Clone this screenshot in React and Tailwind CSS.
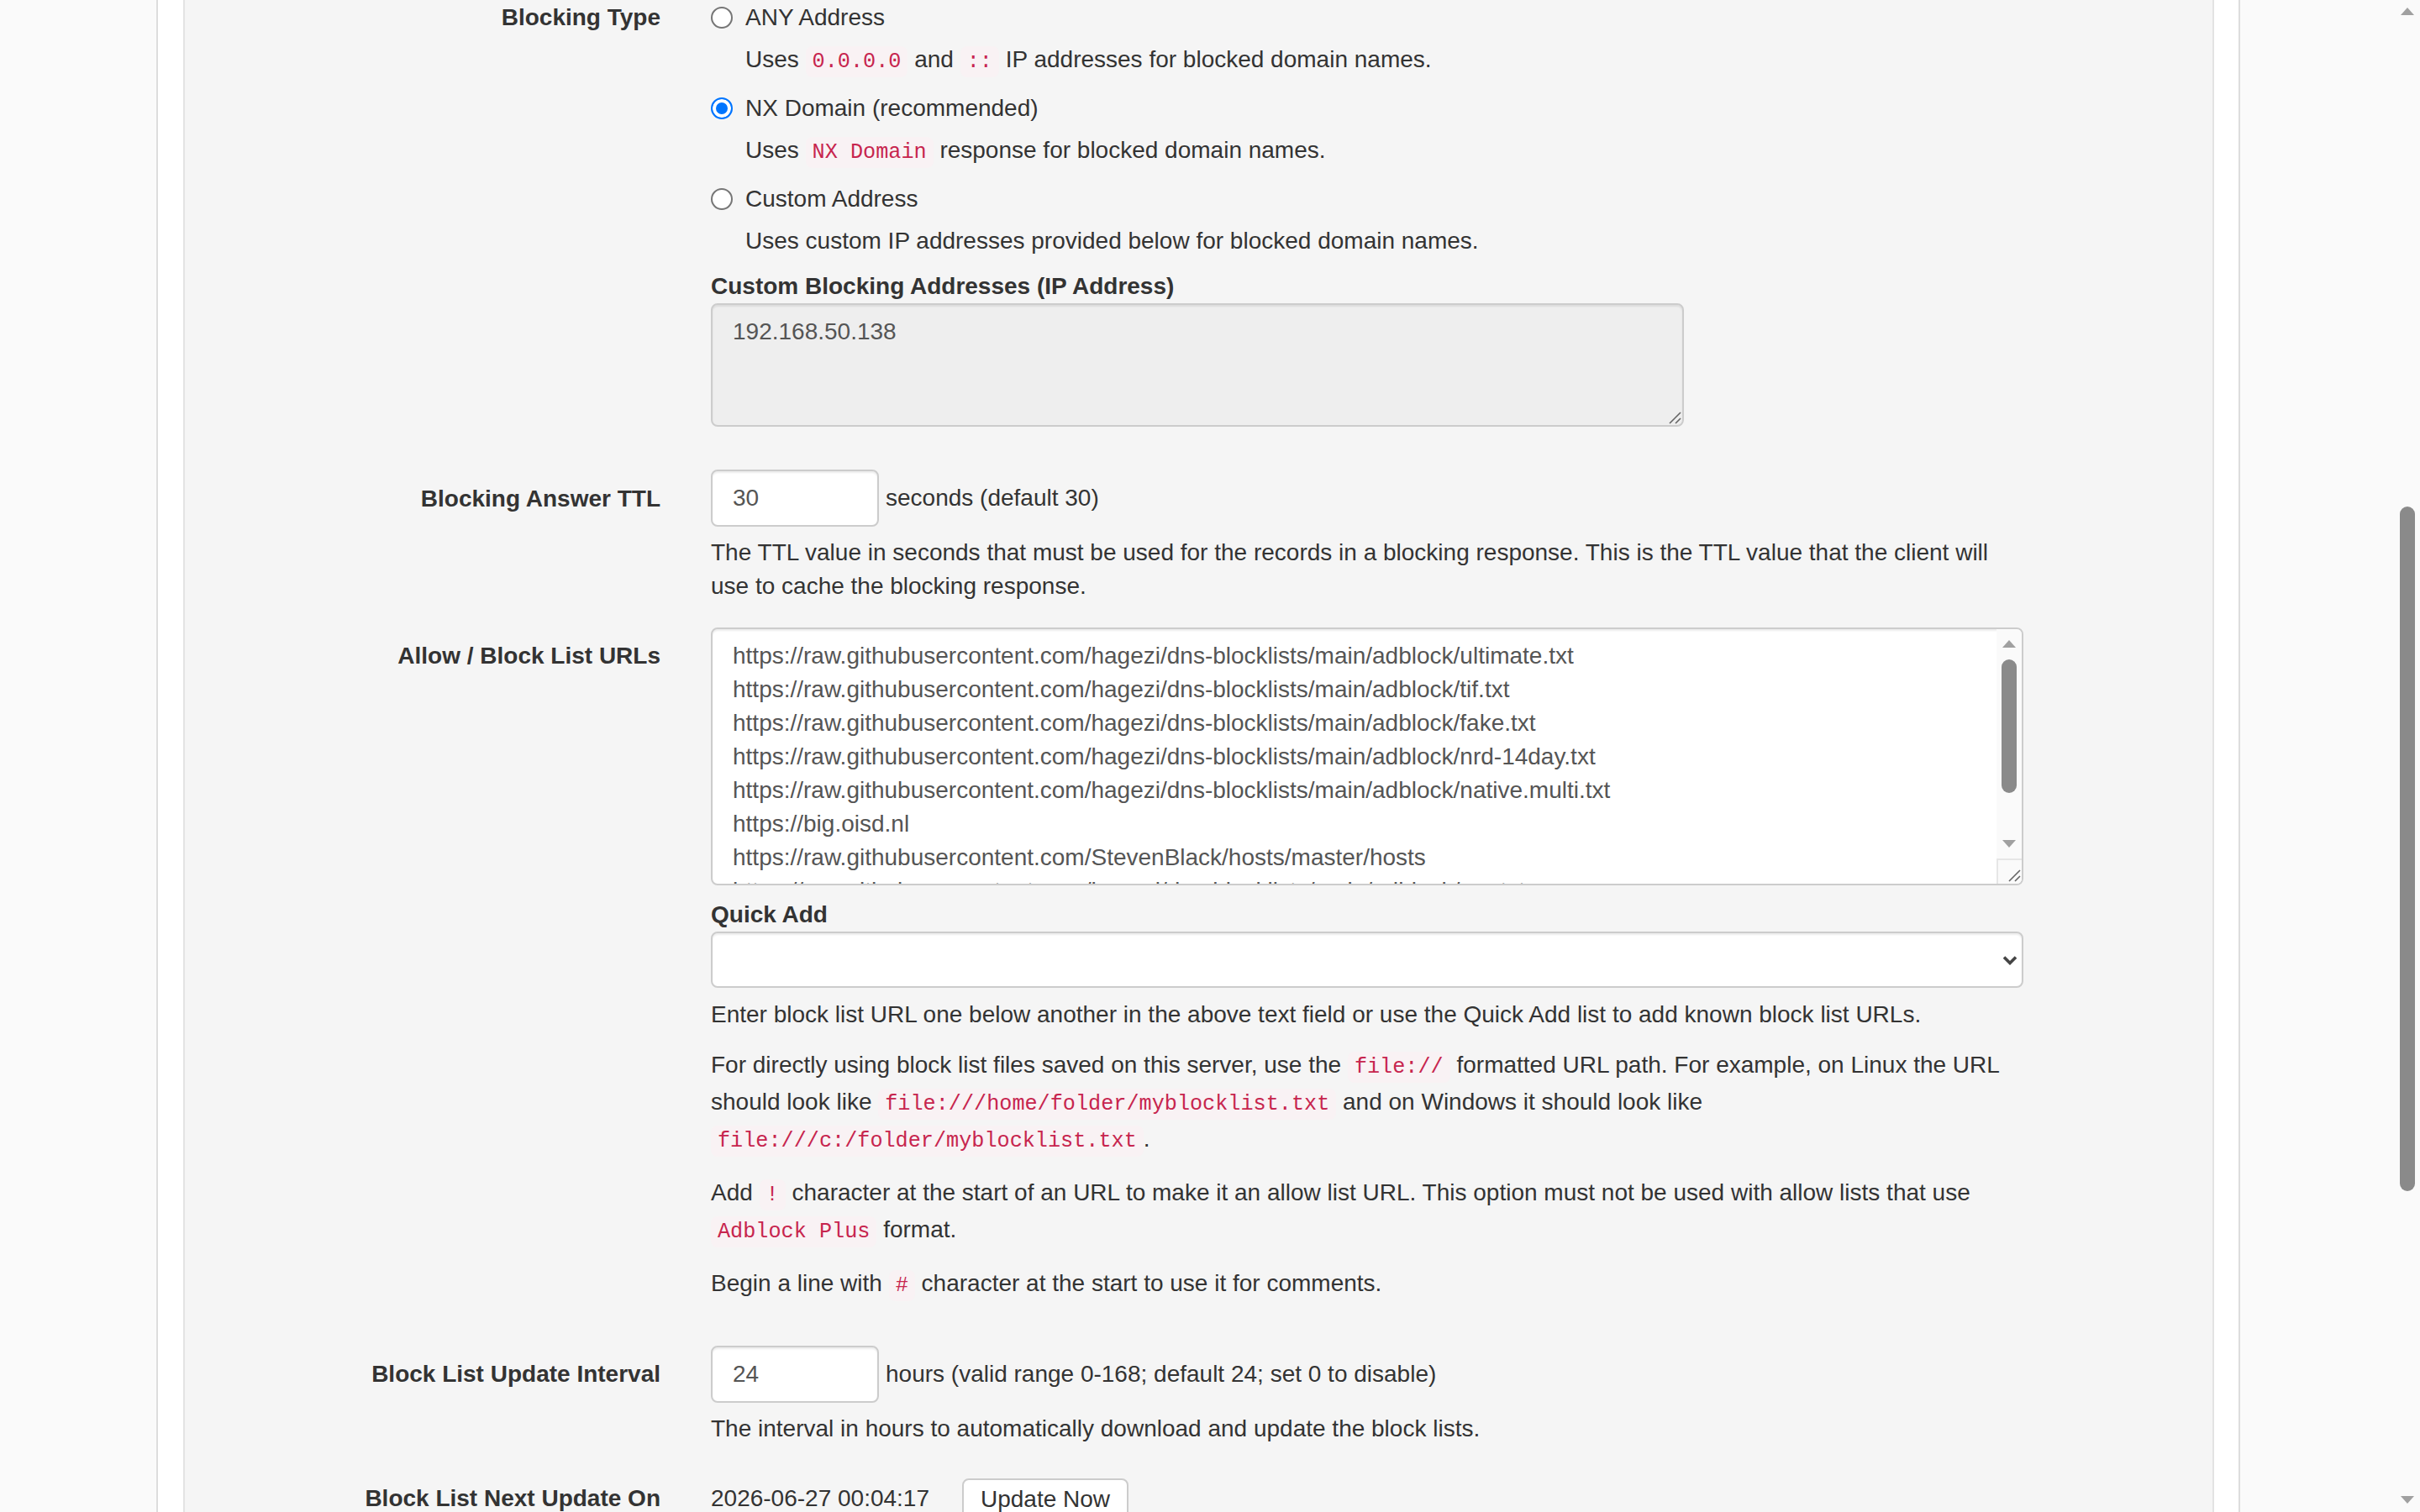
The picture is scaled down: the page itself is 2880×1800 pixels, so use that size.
import React from "react";

const blockListUrls = [
  "https://raw.githubusercontent.com/hagezi/dns-blocklists/main/adblock/ultimate.txt",
  "https://raw.githubusercontent.com/hagezi/dns-blocklists/main/adblock/tif.txt",
  "https://raw.githubusercontent.com/hagezi/dns-blocklists/main/adblock/fake.txt",
  "https://raw.githubusercontent.com/hagezi/dns-blocklists/main/adblock/nrd-14day.txt",
  "https://raw.githubusercontent.com/hagezi/dns-blocklists/main/adblock/native.multi.txt",
  "https://big.oisd.nl",
  "https://raw.githubusercontent.com/StevenBlack/hosts/master/hosts",
  "https://raw.githubusercontent.com/hagezi/dns-blocklists/main/adblock/pro.txt",
];

function Code({ children }) {
  return (
    <code className="rounded-[8px] bg-[#f9f2f4] px-[8px] py-[4px] font-['Liberation_Mono','Courier_New',monospace] text-[25.2px] leading-[28px] text-[#c7254e]">
      {children}
    </code>
  );
}

function Row({ label, labelPt = "pt-[14px]", className = "", children }) {
  return (
    <div className={`flex ${className}`}>
      <div className={`w-[596px] shrink-0 pr-[30px] text-right font-bold leading-[40px] ${labelPt}`}>
        {label}
      </div>
      <div className="w-[1622px] shrink-0 px-[30px]">{children}</div>
    </div>
  );
}

function Radio({ label, checked }) {
  return (
    <label className="flex h-[40px] items-center gap-[15px]">
      <input
        type="radio"
        name="blockingType"
        defaultChecked={checked}
        className="m-0 h-[26px] w-[26px] shrink-0 appearance-none rounded-full border-2 border-[#767676] bg-white checked:border-[#0075ff] checked:bg-[#0075ff] checked:shadow-[inset_0_0_0_4px_#ffffff]"
      />
      <span>{label}</span>
    </label>
  );
}

function Triangle({ up }) {
  return (
    <svg width="16" height="9" viewBox="0 0 16 9" className="block">
      <path d={up ? "M8 0 L16 9 L0 9 Z" : "M0 0 L16 0 L8 9 Z"} fill="#a0a0a0" />
    </svg>
  );
}

function ResizeGrip() {
  return (
    <svg width="16" height="16" viewBox="0 0 16 16" className="block">
      <path d="M2 15 L15 2 M9 15 L15 9" stroke="#666" strokeWidth="1.6" fill="none" />
    </svg>
  );
}

function TextInput({ value }) {
  return (
    <input
      type="text"
      defaultValue={value}
      className="h-[68px] w-[200px] shrink-0 rounded-[8px] border-2 border-[#ccc] bg-white px-[24px] text-[#555] shadow-[inset_0_2px_2px_rgba(0,0,0,0.075)] outline-none"
    />
  );
}

function PageScrollbar() {
  return (
    <div className="flex h-full w-[30px] shrink-0 flex-col bg-[#fafafa]">
      <div className="flex h-[30px] items-center justify-center pb-[4px]">
        <Triangle up />
      </div>
      <div className="mx-auto mt-[573px] h-[815px] w-[18px] rounded-full bg-[#8a8a8a]" />
      <div className="flex-1" />
      <div className="flex h-[30px] items-center justify-center">
        <Triangle />
      </div>
    </div>
  );
}

export default function App() {
  return (
    <div className="flex h-screen overflow-hidden bg-[#fafafa] font-['Liberation_Sans',Arial,sans-serif] text-[28px] leading-[40px] text-[#333]">
      <div className="min-w-0 flex-1">
        <div className="ml-[186px] h-full w-[2480px] border-x-2 border-[#ddd] bg-white pl-[30px] pr-[29px]">
          <div className="flow-root h-full border-x-2 border-[#e3e3e3] bg-[#f5f5f5]">
            <div className="-mt-[13px]">
              {/* Blocking Type */}
              <Row label="Blocking Type">
                <div className="pt-[14px]">
                  <Radio label="ANY Address" />
                  <div className="mt-[10px] pl-[41px]">
                    Uses <Code>0.0.0.0</Code> and <Code>::</Code> IP addresses for blocked domain names.
                  </div>
                  <div className="mt-[18px]">
                    <Radio label="NX Domain (recommended)" checked />
                  </div>
                  <div className="mt-[10px] pl-[41px]">
                    Uses <Code>NX Domain</Code> response for blocked domain names.
                  </div>
                  <div className="mt-[18px]">
                    <Radio label="Custom Address" />
                  </div>
                  <div className="mt-[10px] pl-[41px]">
                    Uses custom IP addresses provided below for blocked domain names.
                  </div>
                  <div className="mt-[14px] font-bold">Custom Blocking Addresses (IP Address)</div>
                  <div className="relative w-[1158px]">
                    <textarea
                      readOnly
                      defaultValue="192.168.50.138"
                      className="block h-[147px] w-full resize-none rounded-[8px] border-2 border-[#ccc] bg-[#eee] px-[24px] py-[12px] text-[#555] shadow-[inset_0_2px_2px_rgba(0,0,0,0.075)] outline-none"
                    />
                    <div className="pointer-events-none absolute bottom-[3px] right-[3px]">
                      <ResizeGrip />
                    </div>
                  </div>
                </div>
              </Row>

              {/* Blocking Answer TTL */}
              <Row label="Blocking Answer TTL" labelPt="pt-[15px]" className="mt-[51px]">
                <div className="flex items-center">
                  <TextInput value="30" />
                  <span className="ml-[8px]">seconds (default 30)</span>
                </div>
                <p className="mt-[11px]">
                  The TTL value in seconds that must be used for the records in a blocking response. This is the TTL value that the client will use to cache the blocking response.
                </p>
              </Row>

              {/* Allow / Block List URLs */}
              <Row label="Allow / Block List URLs" className="mt-[29px]">
                <div className="flex h-[307px] overflow-hidden rounded-[8px] border-2 border-[#ccc] bg-white shadow-[inset_0_2px_2px_rgba(0,0,0,0.075)]">
                  <textarea
                    readOnly
                    defaultValue={blockListUrls.join("\n")}
                    className="h-full min-w-0 flex-1 resize-none overflow-hidden whitespace-pre bg-transparent py-[12px] pl-[24px] pr-0 text-[#555] outline-none"
                  />
                  <div className="flex w-[30px] shrink-0 flex-col bg-[#fafafa]">
                    <div className="flex h-[30px] items-center justify-center pt-[4px]">
                      <Triangle up />
                    </div>
                    <div className="mx-auto mt-[6px] h-[159px] w-[18px] rounded-full bg-[#8a8a8a]" />
                    <div className="flex-1" />
                    <div className="flex h-[30px] items-center justify-center pb-[6px]">
                      <Triangle />
                    </div>
                    <div className="flex h-[30px] items-end justify-end border-l-2 border-t-2 border-[#e6e6e6] bg-[#fafafa] pb-[2px] pr-[1px]">
                      <ResizeGrip />
                    </div>
                  </div>
                </div>

                <div className="mt-[15px] font-bold">Quick Add</div>
                <div className="relative">
                  <select className="block h-[67px] w-full appearance-none rounded-[8px] border-2 border-[#ccc] bg-white px-[24px] text-[#555] shadow-[inset_0_2px_2px_rgba(0,0,0,0.075)] outline-none">
                    <option value=""></option>
                  </select>
                  <svg
                    width="18"
                    height="12"
                    viewBox="0 0 18 12"
                    className="pointer-events-none absolute right-[7px] top-1/2 -translate-y-1/2"
                  >
                    <path d="M2 2.5 L9 9.5 L16 2.5" stroke="#444" strokeWidth="3.6" fill="none" />
                  </svg>
                </div>

                <p className="mt-[12px]">
                  Enter block list URL one below another in the above text field or use the Quick Add list to add known block list URLs.
                </p>
                <p className="mt-[18px] leading-[44px]">
                  For directly using block list files saved on this server, use the <Code>file://</Code> formatted URL path. For example, on Linux the URL should look like <Code>file:///home/folder/myblocklist.txt</Code> and on Windows it should look like <Code>file:///c:/folder/myblocklist.txt</Code>.
                </p>
                <p className="mt-[20px] leading-[44px]">
                  Add <Code>!</Code> character at the start of an URL to make it an allow list URL. This option must not be used with allow lists that use <Code>Adblock Plus</Code> format.
                </p>
                <p className="mt-[20px] leading-[44px]">
                  Begin a line with <Code>#</Code> character at the start to use it for comments.
                </p>
              </Row>

              {/* Block List Update Interval */}
              <Row label="Block List Update Interval" className="mt-[52px]">
                <div className="flex items-center">
                  <TextInput value="24" />
                  <span className="ml-[8px]">hours (valid range 0-168; default 24; set 0 to disable)</span>
                </div>
                <p className="mt-[11px]">The interval in hours to automatically download and update the block lists.</p>
              </Row>

              {/* Block List Next Update On */}
              <Row label="Block List Next Update On" labelPt="pt-[13px]" className="mt-[30px]">
                <div className="flex items-start pt-[9px]">
                  <span className="mt-[4px]">2026-06-27 00:04:17</span>
                  <button
                    type="button"
                    className="ml-[39px] rounded-[8px] border-2 border-[#ccc] bg-white px-[20px] pb-[13px] pt-[3px] leading-[40px] text-[#333]"
                  >
                    Update Now
                  </button>
                </div>
              </Row>
            </div>
          </div>
        </div>
      </div>
      <PageScrollbar />
    </div>
  );
}
